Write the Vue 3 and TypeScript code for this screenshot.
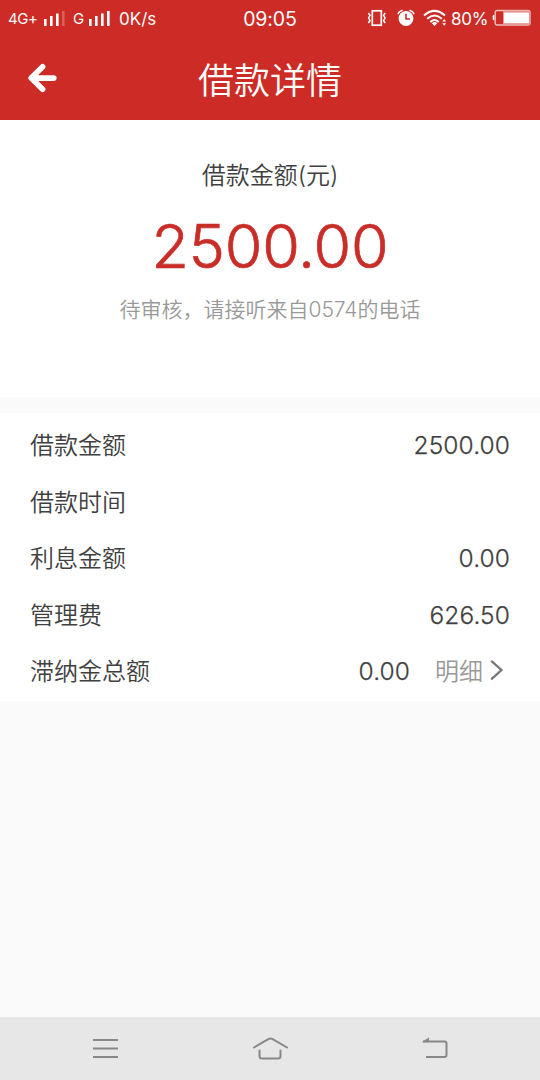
<script setup lang="ts">
interface Row {
  label: string
  value: string
  link?: string
}

const rows: Row[] = [
  { label: '借款金额', value: '2500.00' },
  { label: '借款时间', value: '' },
  { label: '利息金额', value: '0.00' },
  { label: '管理费', value: '626.50' },
  { label: '滞纳金总额', value: '0.00', link: '明细' },
]
</script>

<template>
  <div class="screen">
    <header class="header">
      <div class="status">
        <div class="status-left">
          <span class="net net-4g">4G+</span>
          <svg class="signal" width="22" height="16" viewBox="0 0 22 16" fill="#fff">
            <rect x="0" y="9" width="2.6" height="7" /><rect x="6" y="6" width="2.6" height="10" />
            <rect x="12" y="3.5" width="2.6" height="12.5" /><rect x="18" y="1" width="2.6" height="15" opacity=".25" />
          </svg>
          <span class="net net-g">G</span>
          <svg class="signal" width="22" height="16" viewBox="0 0 22 16" fill="#fff">
            <rect x="0" y="9" width="2.6" height="7" /><rect x="6" y="6" width="2.6" height="10" />
            <rect x="12" y="3.5" width="2.6" height="12.5" /><rect x="18" y="1" width="2.6" height="15" />
          </svg>
          <span class="speed">0K/s</span>
        </div>
        <span class="clock">09:05</span>
        <div class="status-right">
          <svg class="vibrate" width="20" height="18" viewBox="0 0 20 18" fill="none" stroke="#fff" stroke-width="1.7">
            <rect x="5.3" y="1.8" width="9" height="14.4" />
            <path d="M1.4 4 3 6.4 1.6 9 3 11.6 1.4 14M18.2 4 16.6 6.4 18 9 16.6 11.6 18.2 14" stroke-width="1.5" />
          </svg>
          <svg class="alarm" width="18" height="18" viewBox="0 0 18 18">
            <circle cx="9" cy="9.5" r="7.4" fill="#fff" />
            <path d="M1.2 4.6Q2 2.2 4.9 1.4M16.8 4.6Q16 2.2 13.1 1.4" fill="none" stroke="#fff" stroke-width="1.6" stroke-linecap="round" />
            <path d="M9 4.8V10H13" fill="none" stroke="#cd2c26" stroke-width="1.6" />
          </svg>
          <svg class="wifi" width="24" height="18" viewBox="0 0 24 18" fill="none" stroke="#fff" stroke-width="2">
            <path d="M1 6.5Q11.5-2.7 22 6.5M4.2 9.8Q11.5 3.3 18.8 9.8M7.3 12.9Q11.5 9.2 15.7 12.9" />
            <path d="M8.8 14.2Q11.5 12 14.2 14.2L11.5 17ZM19.2 12.6l2-2.6 2 2.6ZM19.2 14.2l2 2.6 2-2.6Z" fill="#fff" stroke="none" />
          </svg>
          <span class="percent">80%</span>
          <svg class="battery" width="40" height="18" viewBox="0 0 40 18">
            <path d="M2.5 6H1.8Q.7 6 .7 7.2V10Q.7 11.2 1.8 11.2H2.5Z" fill="#fff" />
            <rect x="3.2" y="1.5" width="34.8" height="14.5" rx="2" fill="none" stroke="#f1bfbb" stroke-width="1.4" />
            <rect x="11" y="1.5" width="27" height="14.5" rx="1.5" fill="#e89994" />
            <rect x="12" y="3.7" width="25" height="10.4" fill="#fff" />
          </svg>
        </div>
      </div>
      <div class="title-bar">
        <svg class="back" width="30" height="30" viewBox="0 0 30 30" fill="none" stroke="#fff" stroke-width="5.6" stroke-linecap="round" stroke-linejoin="round">
          <path d="M14.6 3.8 3.2 15.1 14.6 26.2M3.8 15.1H25.8" />
        </svg>
        <h1>借款详情</h1>
      </div>
    </header>

    <section class="summary">
      <div class="caption">借款金额(元)</div>
      <div class="amount">2500.00</div>
      <div class="hint">待审核，请接听来自0574的电话</div>
    </section>

    <section class="details">
      <div v-for="row in rows" :key="row.label" class="row">
        <span class="label">{{ row.label }}</span>
        <span class="value">{{ row.value }}</span>
        <span v-if="row.link" class="link">
          <span class="link-text">{{ row.link }}</span>
          <svg width="14" height="22" viewBox="0 0 14 22" fill="none" stroke="#777" stroke-width="2.3">
            <path d="M1.2.9 11.5 10 1.2 19.3" />
          </svg>
        </span>
      </div>
    </section>

    <nav class="nav">
      <svg width="26" height="22" viewBox="0 0 26 22" stroke="#888" stroke-width="2">
        <path d="M0 2H25M0 10.5H25M0 19H25" />
      </svg>
      <svg width="36" height="24" viewBox="0 0 36 24" fill="none" stroke="#888" stroke-width="2" stroke-linecap="round" stroke-linejoin="round">
        <path d="M1 10.5 15.3 2.1Q17.5.9 19.7 2.1L34 10.5M6.5 13.5V19Q6.5 21.5 9 21.5H25Q27.5 21.5 27.5 19V13.5" />
      </svg>
      <svg class="nav-back" width="26" height="22" viewBox="0 0 26 22" fill="none" stroke="#888" stroke-width="2">
        <path d="M1 3.5H22.5Q24.5 3.5 24.5 5.5V17Q24.5 19 22.5 19H4" />
        <path d="M-.5 4.2 7-.6V4.2Z" fill="#888" stroke="none" />
      </svg>
    </nav>
  </div>
</template>

<style>
body {
  margin: 0;
}
</style>

<style scoped>
.screen {
  width: 540px;
  height: 1080px;
  display: flex;
  flex-direction: column;
  overflow: hidden;
  background: #fafafa;
  color: #404040;
  font-family: Inter, "Noto Sans CJK SC", sans-serif;
  font-weight: 350;
}
.header {
  height: 120px;
  flex: none;
  background: #cd2c26;
  color: #fff;
}
.status {
  height: 37px;
  display: grid;
  grid-template-columns: 1fr auto 1fr;
  align-items: center;
  font-weight: 400;
}
.status-left,
.status-right {
  display: flex;
  align-items: center;
}
.status svg {
  flex: none;
}
.status-left {
  padding-left: 8px;
}
.status-right {
  justify-content: flex-end;
  padding-right: 8px;
}
.net {
  font-size: 15px;
  letter-spacing: -0.4px;
}
.net-4g {
  width: 36px;
}
.net-g {
  width: 16px;
  margin-left: 7px;
}
.signal {
  margin-top: -2px;
}
.speed {
  margin-left: 8px;
  font-size: 17px;
}
.clock {
  font-size: 19.5px;
  letter-spacing: -0.1px;
}
.vibrate {
  margin-right: 10px;
  margin-top: -1px;
}
.alarm {
  margin-right: 8px;
  margin-top: -1px;
}
.wifi {
  margin-right: 4px;
  margin-top: -1px;
}
.percent {
  width: 41px;
  font-size: 17px;
  letter-spacing: -0.3px;
}
.battery {
  margin-top: -1px;
}
.title-bar {
  height: 83px;
  display: grid;
  grid-template-columns: 60px 1fr 60px;
  align-items: center;
}
.back {
  margin-left: 28px;
  margin-top: -2px;
}
h1 {
  margin: 5px 0 0;
  font-size: 36px;
  line-height: 52px;
  font-weight: 350;
  text-align: center;
}
.summary {
  height: 277px;
  flex: none;
  box-sizing: border-box;
  padding-top: 38px;
  background: #fff;
  text-align: center;
}
.caption {
  font-size: 24px;
  line-height: 36px;
}
.amount {
  margin-top: 12px;
  font-size: 61px;
  line-height: 80px;
  font-weight: 300;
  letter-spacing: -0.2px;
  color: #c92d28;
  -webkit-text-stroke: 0.7px #c92d28;
}
.hint {
  margin-top: 8px;
  font-size: 21px;
  line-height: 32px;
  color: #999;
}
.details {
  margin-top: 16px;
  height: 288px;
  flex: none;
  box-sizing: border-box;
  padding: 4px 30px 0;
  background: #fff;
}
.row {
  height: 56.5px;
  display: flex;
  align-items: center;
  font-size: 24px;
}
.label,
.link-text {
  margin-top: -3px;
}
.value {
  margin-left: auto;
  font-size: 24.5px;
  font-weight: 300;
  letter-spacing: 0.1px;
  -webkit-text-stroke: 0.25px #404040;
}
.link {
  display: flex;
  align-items: center;
  gap: 7px;
  margin-left: 25px;
  padding-right: 6px;
  color: #999;
}
.nav {
  margin-top: auto;
  height: 63px;
  box-sizing: border-box;
  padding: 0 92px 0 93px;
  flex: none;
  display: flex;
  align-items: center;
  justify-content: space-between;
  background: #e7e7e7;
}
.nav-back {
  overflow: visible;
}
</style>
